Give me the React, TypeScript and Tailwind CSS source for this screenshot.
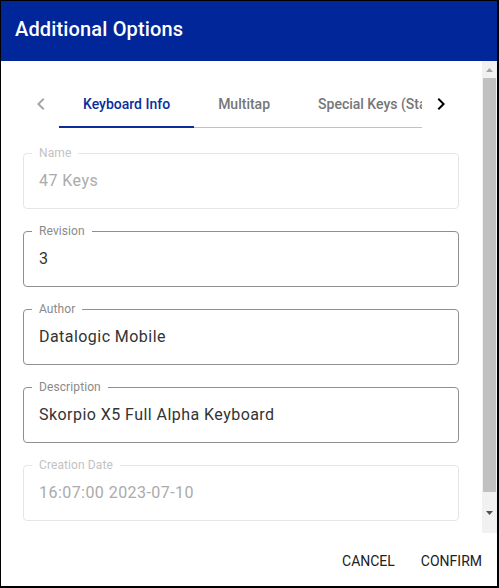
import React from "react";

const font = { fontFamily: "Roboto, 'Liberation Sans', sans-serif" };

function ArrowIcon({ dir, className }: { dir: "left" | "right"; className: string }) {
  const d =
    dir === "left"
      ? "M15.41 16.59 10.83 12l4.58-4.59L14 6l-6 6 6 6 1.41-1.41z"
      : "M8.59 16.59 13.17 12 8.59 7.41 10 6l6 6-6 6-1.41-1.41z";
  return (
    <svg viewBox="0 0 24 24" width="24" height="24" className={className} fill="currentColor">
      <path d={d} />
    </svg>
  );
}

function Field({ label, value, disabled }: { label: string; value: string; disabled?: boolean }) {
  return (
    <fieldset
      className={`rounded-[4px] border px-[8px] ${disabled ? "border-[#e6e6e6]" : "border-[#8f8f8f]"}`}
    >
      <legend
        className={`px-[7px] text-[12px] leading-[12px] tracking-[0.1px] ${
          disabled ? "text-[#c2c2c2]" : "text-[#8a8a8a]"
        }`}
      >
        {label}
      </legend>
      <div
        className={`pl-[7px] pt-[10px] pb-[15px] text-[16px] leading-[24px] tracking-[0.45px] ${
          disabled ? "text-[#ababab]" : "text-[#333]"
        }`}
      >
        {value}
      </div>
    </fieldset>
  );
}

function ScrollBar() {
  return (
    <div className="w-[15px] shrink-0 bg-[#f1f1f1] flex flex-col">
      <div className="h-[17px] flex items-center justify-center">
        <svg width="7" height="4" viewBox="0 0 7 4">
          <path d="M3.5 0 7 4H0z" fill="#a3a3a3" />
        </svg>
      </div>
      <div className="mx-[1px] h-[414px] bg-[#c1c1c1]" />
      <div className="flex-1 flex items-center justify-center">
        <svg width="7" height="4" viewBox="0 0 7 4">
          <path d="M0 0h7L3.5 4z" fill="#505050" />
        </svg>
      </div>
    </div>
  );
}

const tabs = ["Keyboard Info", "Multitap", "Special Keys (Start)"];

export default function App() {
  return (
    <div
      className="w-[499px] h-[588px] flex flex-col bg-white border-l border-t border-r-2 border-b-2 border-black"
      style={font}
    >
      <header className="bg-[#002699] pl-[14px] pt-[12px] pb-[16px]">
        <h1 className="text-[20px] leading-8 font-medium text-white tracking-[0.15px]">Additional Options</h1>
      </header>

      <div className="h-[472px] flex">
        <div className="flex-1 min-w-0 overflow-hidden">
          <div className="pl-[22px] pr-[23px] pt-[19px] pb-[38px]">
            <div className="flex h-[48px] items-stretch">
              <div className="w-[36px] flex items-center justify-center">
                <ArrowIcon dir="left" className="text-[#a6a6a6]" />
              </div>
              <div className="relative w-[363px] overflow-hidden">
                <div className="absolute left-0 right-0 bottom-0 h-px bg-[#b7c0db]" />
                <div className="flex h-full whitespace-nowrap">
                  {tabs.map((t, i) => (
                    <div
                      key={t}
                      className={`relative flex items-center px-6 text-[14px] font-medium ${
                        i === 0 ? "text-[#0b2d9c]" : "text-[#767676]"
                      }`}
                    >
                      {t}
                      {i === 0 && <div className="absolute left-0 right-0 bottom-0 h-[2px] bg-[#0b2d9c]" />}
                    </div>
                  ))}
                </div>
              </div>
              <div className="flex-1 flex items-center justify-center">
                <ArrowIcon dir="right" className="text-black" />
              </div>
            </div>

            <div className="mt-[19px] flex flex-col gap-[16px]">
              <Field label="Name" value="47 Keys" disabled />
              <Field label="Revision" value="3" />
              <Field label="Author" value="Datalogic Mobile" />
              <Field label="Description" value="Skorpio X5 Full Alpha Keyboard" />
              <Field label="Creation Date" value="16:07:00 2023-07-10" disabled />
            </div>
          </div>
        </div>
        <ScrollBar />
      </div>

      <footer className="flex justify-end gap-[10px] pt-[10px] pr-[7px]">
        <button className="h-[36px] px-2 text-[14px] text-[#212121]">CANCEL</button>
        <button className="h-[36px] px-2 text-[14px] text-[#212121]">CONFIRM</button>
      </footer>
    </div>
  );
}
